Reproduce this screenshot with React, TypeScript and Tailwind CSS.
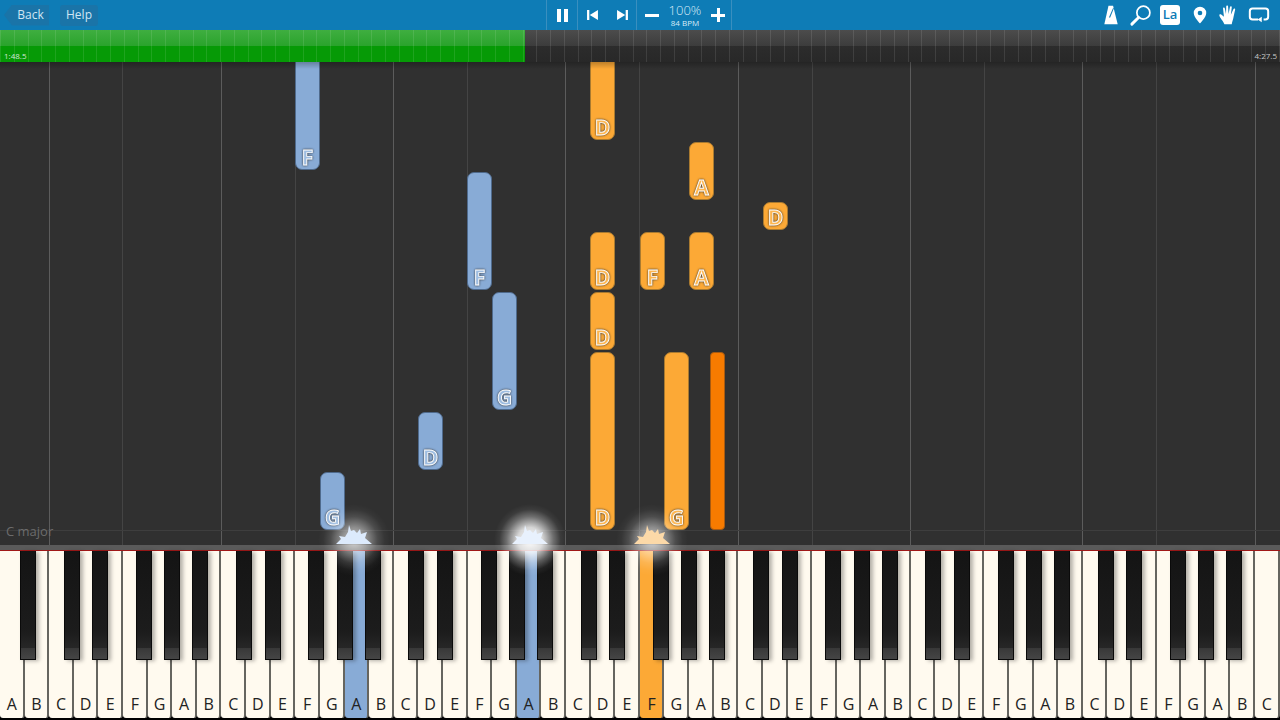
import React from 'react';

const FONT = "font-['Open_Sans','Noto_Sans',sans-serif]";
const WHITE_W = 1280 / 52;
const NAMES = ['A', 'B', 'C', 'D', 'E', 'F', 'G'];

// offset of each black key centre from the white key boundary
const BLACK_OFFSET: Record<string, number> = { A: 3.5, C: -2, D: 2, F: -3.7, G: 0 };

const whiteKeys = Array.from({ length: 52 }, (_, i) => NAMES[i % 7]);
const blackKeys = whiteKeys
  .map((name, i) => (name in BLACK_OFFSET && i < 51 ? (i + 1) * WHITE_W + BLACK_OFFSET[name] : -1))
  .filter((x) => x >= 0);

const gridLines = Array.from({ length: 15 }, (_, i) => ({
  x: (i % 2 === 0 ? 49.2 + 86.15 * i : 49.2 + 86.15 * (i - 1) + 73.8) - 0.7,
  strong: i % 2 === 0,
}));

interface NoteProps {
  x: number;
  top: number;
  bottom: number;
  w?: number;
  label?: string;
  tone: 'blue' | 'orange' | 'dark';
}

const Note: React.FC<NoteProps> = ({ x, top, bottom, w = 25, label, tone }) => {
  const toneClass =
    tone === 'blue'
      ? 'bg-[#88abd6] border-[#4f6a8c] text-[#9dbce0]'
      : tone === 'orange'
        ? 'bg-[#fca936] border-[#a97a30] text-[#fdb650]'
        : 'bg-[#f77b00] border-[#a85a10] text-[#f77b00]';
  return (
    <div
      className={`absolute flex items-end justify-center border ${tone === 'dark' ? 'rounded-[4px]' : 'rounded-[7px]'} ${toneClass}`}
      style={{ left: x, top, width: w, height: bottom - top }}
    >
      {label && (
        <span className="translate-y-[1px] text-[21px] leading-[26px] font-bold [-webkit-text-stroke:0.9px_#fff] [filter:drop-shadow(0_0_1px_#2e2e2e)]">
          {label}
        </span>
      )}
    </div>
  );
};

const notes: NoteProps[] = [
  { x: 295, top: 50, bottom: 170, label: 'F', tone: 'blue' },
  { x: 467, top: 172, bottom: 290, label: 'F', tone: 'blue' },
  { x: 492, top: 292, bottom: 410, label: 'G', tone: 'blue' },
  { x: 418, top: 412, bottom: 470, label: 'D', tone: 'blue' },
  { x: 320, top: 472, bottom: 530, label: 'G', tone: 'blue' },
  { x: 590, top: 50, bottom: 140, label: 'D', tone: 'orange' },
  { x: 689, top: 142, bottom: 200, label: 'A', tone: 'orange' },
  { x: 763, top: 202, bottom: 230, label: 'D', tone: 'orange' },
  { x: 590, top: 232, bottom: 290, label: 'D', tone: 'orange' },
  { x: 640, top: 232, bottom: 290, label: 'F', tone: 'orange' },
  { x: 689, top: 232, bottom: 290, label: 'A', tone: 'orange' },
  { x: 590, top: 292, bottom: 350, label: 'D', tone: 'orange' },
  { x: 590, top: 352, bottom: 530, label: 'D', tone: 'orange' },
  { x: 664, top: 352, bottom: 530, label: 'G', tone: 'orange' },
  { x: 710, top: 352, bottom: 530, w: 15, tone: 'dark' },
];

const Ticks: React.FC = () => (
  <div className="absolute inset-0 flex justify-between">
    {Array.from({ length: 94 }, (_, i) => (
      <div key={i} className="w-px bg-white/10" />
    ))}
  </div>
);

const Toolbar: React.FC = () => (
  <div className="flex h-[30px] items-center bg-[#0e7cb6] text-[12px] text-[#cfe6f4]">
    <div className="flex w-[546px] items-center pl-[4px]">
      <div className="flex h-[21px] w-[45px] items-center justify-center bg-[#1a74a8] pl-[8px] [clip-path:polygon(8px_0,100%_0,100%_100%,8px_100%,0_50%)]">
        Back
      </div>
      <div className="ml-[11px] flex h-[21px] w-[38px] items-center justify-center rounded-[3px] bg-[#1a74a8]">Help</div>
    </div>
    <div className="flex h-full w-[31px] items-center justify-center border-l border-[#3a8fbf]">
      <div className="h-[13px] w-[11px] border-x-[4px] border-white" />
    </div>
    <div className="flex h-full w-[59px] items-center justify-center gap-[19px] border-l border-[#3a8fbf]">
      <svg viewBox="0 0 12 11" className="h-[10px] w-[11px]" fill="#fff">
        <path d="M0 0h2.500v11H0zM3 5.500 12 0v11z" />
      </svg>
      <svg viewBox="0 0 12 11" className="h-[10px] w-[11px]" fill="#fff">
        <path d="M0 0l9 5.500L0 11zM9.500 0H12v11H9.500z" />
      </svg>
    </div>
    <div className="flex h-full items-center border-x border-[#3a8fbf] pl-[8px] pr-[6px]">
      <div className="h-[3px] w-[14px] bg-white" />
      <div className="flex w-[52px] flex-col items-center text-[#d7ebf6]">
        <span className="text-[13px] leading-[13px] font-light">100%</span>
        <span className="mt-[1px] text-[8px] leading-[9px]">84 BPM</span>
      </div>
      <div className="relative h-[14px] w-[14px]">
        <div className="absolute top-[5.5px] h-[3px] w-[14px] bg-white" />
        <div className="absolute left-[5.5px] h-[14px] w-[3px] bg-white" />
      </div>
    </div>
    <div className="ml-auto flex items-center gap-[8px] pr-[10px]">
      {/* metronome */}
      <svg viewBox="0 0 24 24" className="h-[22px] w-[20px]" fill="#fff">
        <path d="M9 1h5.500L20 23H4z" />
        <path d="M9.500 15 14.500 3.500l1 .5-4.500 11z" fill="#0e7cb6" />
      </svg>
      {/* magnifier */}
      <svg viewBox="0 0 24 24" className="h-[23px] w-[23px]" fill="none" stroke="#fff">
        <circle cx="15" cy="9" r="6.800" strokeWidth="1.800" />
        <path d="M10 14 3 21" strokeWidth="3" strokeLinecap="round" />
      </svg>
      <div className="flex h-[20px] w-[20px] items-center justify-center rounded-[3px] bg-white text-[13px] font-semibold text-[#0e7cb6]">
        La
      </div>
      {/* pin */}
      <svg viewBox="0 0 24 24" className="ml-[2px] h-[22px] w-[20px]" fill="#fff">
        <path fillRule="evenodd" d="M12 2a7.500 7.500 0 0 0-7.500 7.500C4.500 14.500 12 22 12 22s7.500-7.500 7.500-12.500A7.500 7.500 0 0 0 12 2zm0 4.800a2.800 2.800 0 1 1 0 5.600 2.800 2.800 0 0 1 0-5.600z" />
      </svg>
      {/* hand */}
      <svg viewBox="0 0 24 24" className="h-[24px] w-[22px]" fill="#fff">
        <path d="M7 22c-1-3-5-7-5.500-9.500-.3-1.500 1.200-1.800 2-1L6.500 14 5.500 5c-.2-1.500 1.800-1.700 2-.2L8.700 11 9 2.800c0-1.500 2-1.500 2 0l.5 8.200L13 3.500c.3-1.400 2.200-1.100 2 .3l-1 8L16.800 5.600c.5-1.300 2.200-.8 1.900.5L17 14c-.5 3-1.500 5-2 8z" />
      </svg>
      {/* loop */}
      <svg viewBox="0 0 24 24" className="h-[22px] w-[22px]" fill="none" stroke="#fff" strokeWidth="2.200">
        <path d="M11 17H5a3 3 0 0 1-3-3V8a3 3 0 0 1 3-3h14a3 3 0 0 1 3 3v6a3 3 0 0 1-3 3h-2" />
        <path d="M15 14v6l-4.500-3z" fill="#fff" stroke="none" />
      </svg>
    </div>
  </div>
);

const ProgressBar: React.FC = () => (
  <div className="relative flex h-[32px] bg-[linear-gradient(#4c4c4c,#3c3c3c_50%,#2c2c2c_50%,#282828)]">
    <div className="h-full w-[525px] bg-[linear-gradient(#3fae40,#2aa32c_50%,#069a06_50%,#069a06)]" />
    <Ticks />
    <span className="absolute bottom-[1px] left-[4px] text-[8px] leading-[10px] text-[#d5e5d5]">1:48.5</span>
    <span className="absolute bottom-[1px] right-[3px] text-[8px] leading-[10px] text-[#c8c8c8]">4:27.5</span>
  </div>
);

const Glow: React.FC<{ x: number; color: string; strong?: boolean }> = ({ x, color, strong }) => (
  <>
    <div
      className={`pointer-events-none absolute top-[504px] h-[72px] w-[72px] rounded-full ${
        strong
          ? 'bg-[radial-gradient(closest-side,rgba(255,255,255,1),rgba(255,255,255,0.8)_35%,rgba(255,255,255,0.3)_65%,rgba(255,255,255,0.06)_85%,rgba(255,255,255,0)_100%)]'
          : 'bg-[radial-gradient(closest-side,rgba(255,255,255,0.75),rgba(255,255,255,0.45)_35%,rgba(255,255,255,0.14)_65%,rgba(255,255,255,0.03)_85%,rgba(255,255,255,0)_100%)]'
      }`}
      style={{ left: x - 36 }}
    />
    <svg className="pointer-events-none absolute top-[525px] h-[19px] w-[36px]" style={{ left: x - 18 }} viewBox="0 0 36 19" fill={color}>
      <path d="M0 19 5 14 3 11 9 12 12 7 13 0 15 6 18 5 21 8 24 4 25 9 31 7 29 13 36 19z" />
    </svg>
  </>
);

export default function App() {
  return (
    <div className={`relative h-[720px] w-[1280px] overflow-hidden bg-[#303030] ${FONT}`}>
      <Toolbar />
      <ProgressBar />

      {/* falling notes */}
      <div className="relative h-[483px] overflow-hidden">
        {gridLines.map((l) => (
          <div
            key={l.x}
            className={`absolute top-0 h-full w-px ${l.strong ? 'bg-[#5c5c5c]' : 'bg-[#444444]'}`}
            style={{ left: l.x }}
          />
        ))}
        <div className="absolute left-0 top-[468px] h-px w-full bg-[#3e3e3e]" />
        <span className="absolute left-[6px] top-[460px] text-[13px] leading-[18px] text-[#6c6c6c]">C major</span>
        <div className="absolute inset-x-0 -top-[62px] h-[545px]">
          {notes.map((n) => (
            <Note key={`${n.x}-${n.top}`} {...n} />
          ))}
        </div>
        <div className="absolute inset-x-0 top-0 h-[7px] bg-gradient-to-b from-black/25 to-transparent" />
      </div>

      <div className="h-[5px] bg-[#5a5a5a]" />
      <div className="h-px bg-[#a01818]" />

      {/* keyboard */}
      <div className="relative flex h-[169px] bg-black">
        {whiteKeys.map((name, i) => {
          const active = i === 14 || i === 21 ? 'bg-[#88abd6]' : i === 26 ? 'bg-[#fca936]' : 'bg-[#fffaef]';
          return (
            <div
              key={i}
              className={`flex h-[167px] flex-1 items-end justify-center rounded-b-[3px] border-r-2 border-[#66655f] pb-[2px] pl-[1px] text-[16px] leading-[24px] text-[#222] ${active}`}
            >
              {name}
            </div>
          );
        })}
        {blackKeys.map((x) => (
          <div
            key={x}
            className="absolute top-0 flex h-[109px] w-[16px] items-end border-x border-b border-[#0a0a0a] bg-[linear-gradient(#141414,#1c1c1c_75%,#2e2e2e)] shadow-[3px_1px_4px_rgba(0,0,0,0.3)]"
            style={{ left: x - 8 }}
          >
            <div className="h-[11px] w-full bg-[linear-gradient(#383838,#454545)]" />
          </div>
        ))}
      </div>

      <Glow x={354} color="#dceafc" />
      <Glow x={530} color="#e8f1fd" strong />
      <Glow x={652} color="#fcd9a8" />
    </div>
  );
}
